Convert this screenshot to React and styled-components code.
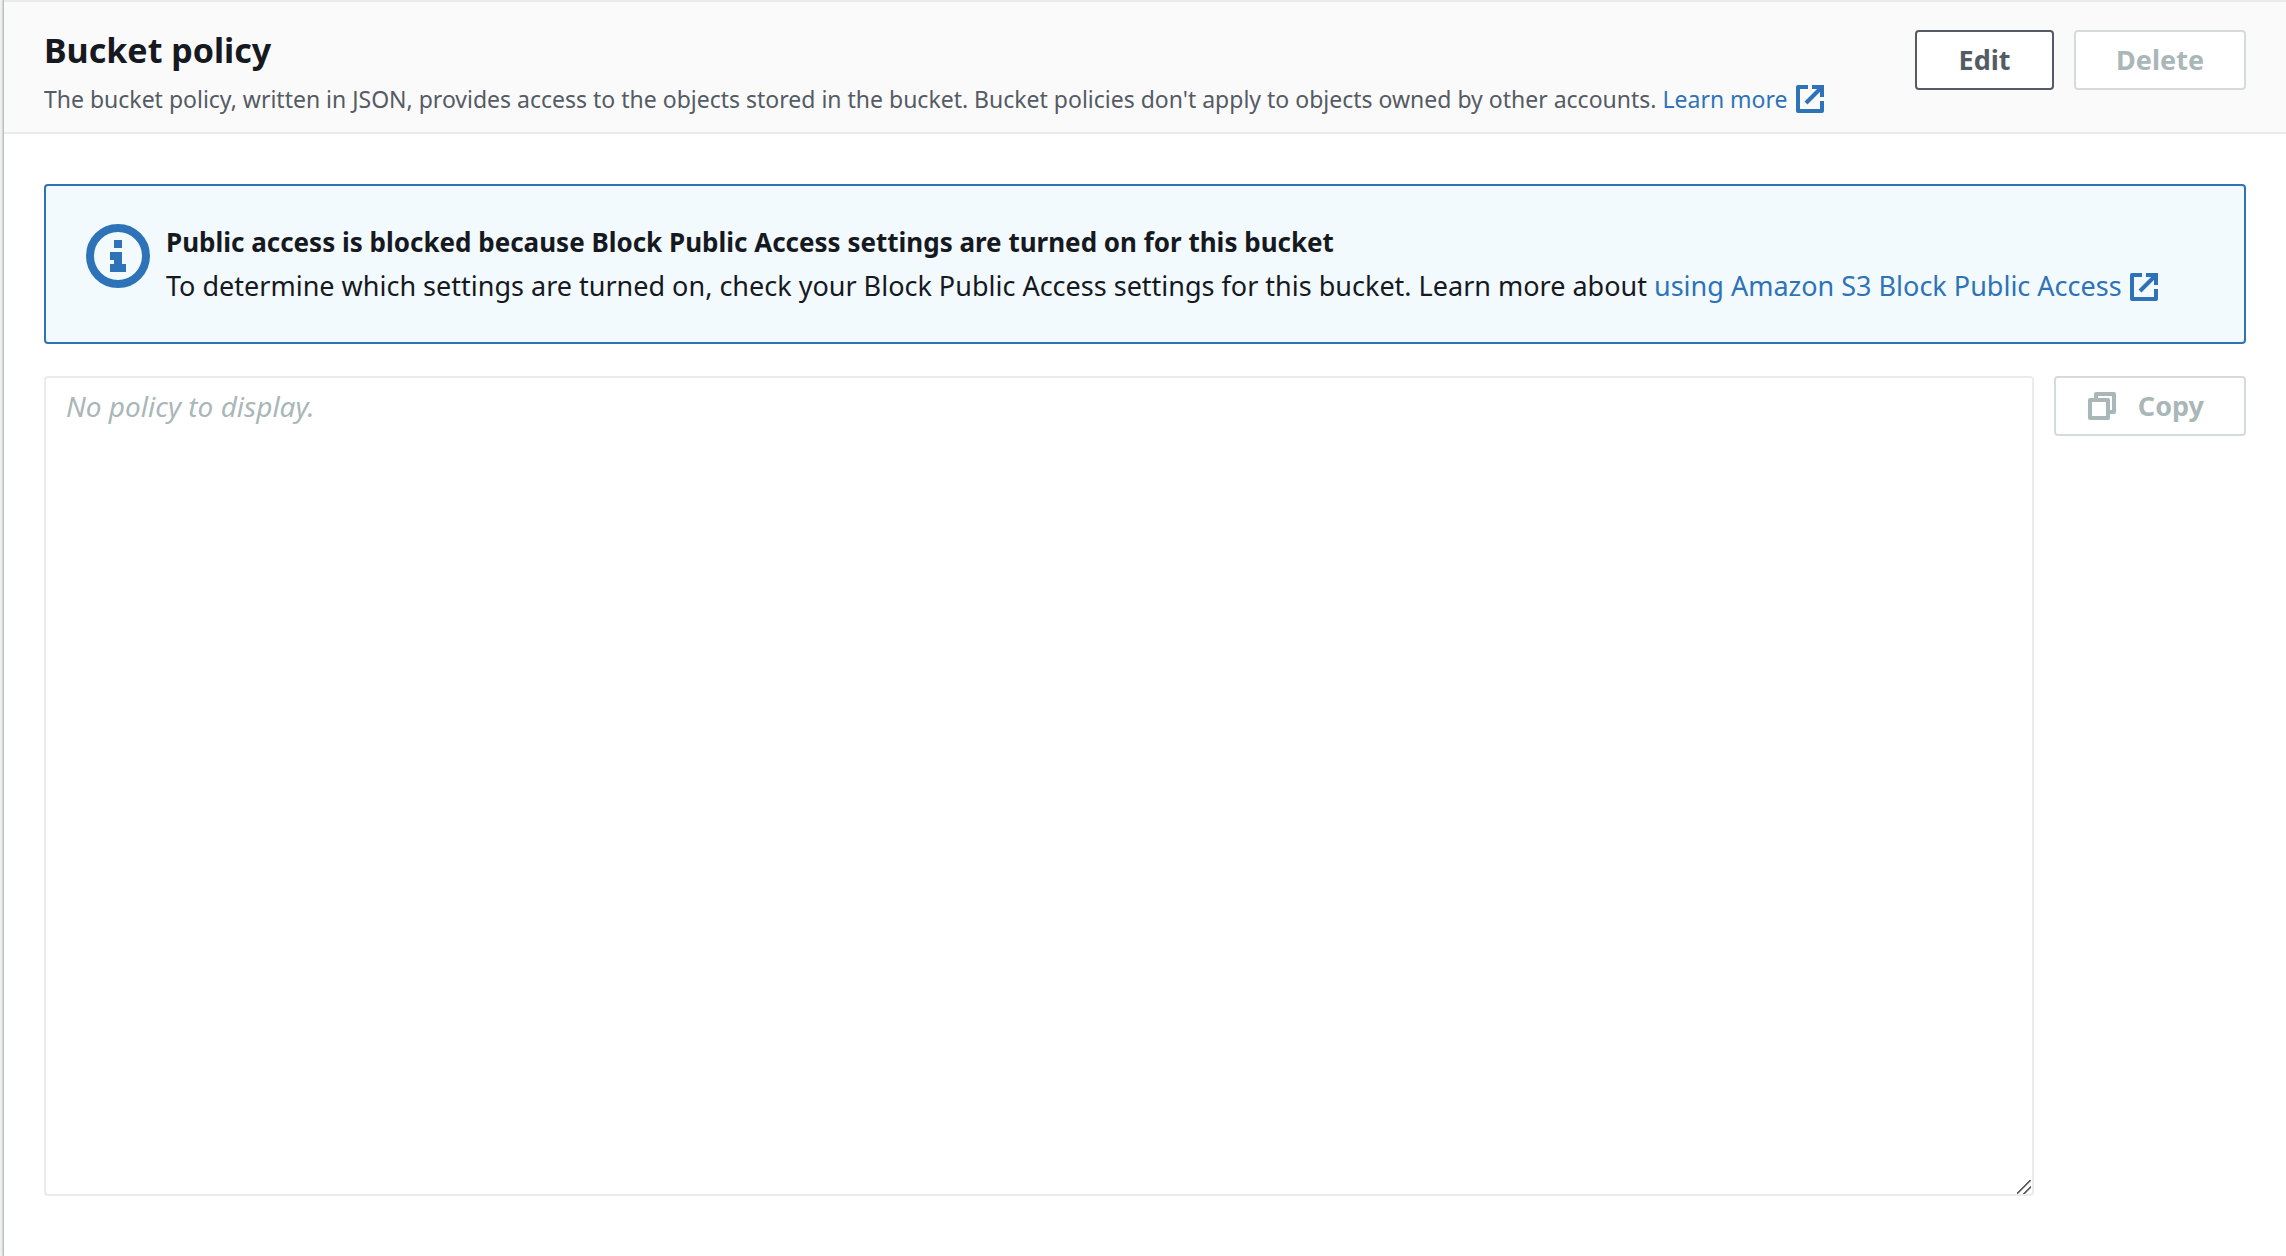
import React from 'react';
import styled, { createGlobalStyle } from 'styled-components';

const color = {
  text: '#16191f',
  secondary: '#545b64',
  disabled: '#aab7b8',
  disabledBorder: '#d5dbdb',
  divider: '#eaecec',
  link: '#2e73b8',
  grip: '#606060',
  infoBackground: '#f2fafd',
  headerBackground: '#fafafa',
};

const GlobalStyle = createGlobalStyle`
  *, *::before, *::after {
    box-sizing: border-box;
  }
  body {
    margin: 0;
    background: #f2f3f3;
    color: ${color.text};
    font-family: "Noto Sans", "Open Sans", sans-serif;
    font-size: 27px;
    line-height: 44px;
  }
`;

const Panel = styled.section`
  min-height: 100vh;
  margin-left: 4px;
  background: #fff;
  border-top: 2px solid ${color.divider};
  box-shadow: -1px 0 1px 0 #b9bebe, -2px 0 2px 0 #d5d8d8;
`;

const PanelHeader = styled.header`
  display: flex;
  align-items: flex-start;
  justify-content: space-between;
  gap: 20px;
  padding: 28px 40px 14px;
  background: ${color.headerBackground};
  border-bottom: 2px solid ${color.divider};
`;

const HeaderText = styled.div`
  display: flex;
  flex-direction: column;
  gap: 10px;
`;

const Title = styled.h2`
  margin: 0;
  font-size: 34px;
  line-height: 40px;
`;

const Description = styled.p`
  margin: 0;
  color: ${color.secondary};
  font-size: 23px;
  line-height: 38px;
`;

const Link = styled.a`
  color: ${color.link};
  text-decoration: none;
  white-space: nowrap;

  &:hover {
    text-decoration: underline;
  }
`;

const Actions = styled.div`
  display: flex;
  flex-shrink: 0;
  gap: 20px;
`;

const Button = styled.button`
  display: inline-flex;
  flex-shrink: 0;
  align-items: center;
  justify-content: center;
  gap: 22px;
  min-width: 139px;
  height: 60px;
  padding: 0 40px 0 ${({ $withIcon }) => ($withIcon ? '32px' : '40px')};
  border: 2px solid ${color.secondary};
  border-radius: 4px;
  background: #fff;
  color: ${color.secondary};
  font: inherit;
  font-weight: 700;
  cursor: pointer;

  &:disabled {
    border-color: ${color.disabledBorder};
    color: ${color.disabled};
    cursor: default;
  }
`;

const PanelBody = styled.div`
  display: flex;
  flex-direction: column;
  gap: 32px;
  padding: 50px 40px 60px;
`;

const Alert = styled.div`
  display: flex;
  align-items: flex-start;
  gap: 16px;
  padding: 34px 40px;
  border: 2px solid ${color.link};
  border-radius: 4px;
  background: ${color.infoBackground};
`;

const AlertTitle = styled.h3`
  margin: 0;
  font-size: 26px;
`;

const AlertText = styled.p`
  margin: 0;
`;

const PolicyRow = styled.div`
  display: flex;
  align-items: flex-start;
  gap: 20px;
`;

const PolicyText = styled.textarea`
  flex: 1;
  min-width: 0;
  height: 820px;
  margin: 0;
  padding: 6px 20px;
  border: 2px solid ${color.divider};
  border-radius: 4px;
  outline: none;
  background: #fff;
  color: ${color.text};
  font: inherit;
  font-size: 28px;
  resize: both;

  &::placeholder {
    color: ${color.disabled};
    font-style: italic;
    opacity: 1;
  }

  &::-webkit-scrollbar {
    width: 16px;
    height: 16px;
  }

  &::-webkit-resizer {
    background: linear-gradient(
        135deg,
        transparent 9px,
        ${color.grip} 9px 10px,
        transparent 11px 14px,
        ${color.grip} 14px 15px,
        transparent 16px
      )
      0 1px / 14px 14px no-repeat;
  }
`;

const Icon = styled.svg`
  flex-shrink: 0;
  width: 28px;
  height: 28px;
  fill: none;
  stroke: currentColor;
  stroke-width: 4;
`;

const InlineIcon = styled(Icon)`
  margin-left: 8px;
  vertical-align: -5px;
`;

const StatusIcon = styled(Icon)`
  width: 64px;
  height: 64px;
  margin-top: 4px;
  color: ${color.link};
  stroke-width: 8;
`;

function ExternalIcon() {
  return (
    <InlineIcon viewBox="0 0 28 28" aria-hidden="true">
      <path d="M12 2H2v24h24V16" strokeLinejoin="round" />
      <path d="M16 2h10v10" />
      <path d="M10 18L26 2" />
    </InlineIcon>
  );
}

function CopyIcon() {
  return (
    <Icon viewBox="0 0 28 28" aria-hidden="true" strokeLinejoin="round">
      <path d="M2 8h18v18H2z" />
      <path d="M8 8V2h18v18h-6" />
    </Icon>
  );
}

function InfoIcon() {
  return (
    <StatusIcon viewBox="0 0 64 64" role="img" aria-label="Info">
      <circle cx="32" cy="32" r="28" />
      <path d="M28 16h8v8h-8zM24 28h12v12h4v8H24v-8h4v-4h-4z" fill="currentColor" stroke="none" />
    </StatusIcon>
  );
}

export default function App() {
  return (
    <>
      <GlobalStyle />
      <Panel aria-labelledby="policy-title">
        <PanelHeader>
          <HeaderText>
            <Title id="policy-title">Bucket policy</Title>
            <Description>
              The bucket policy, written in JSON, provides access to the objects stored in the
              bucket. Bucket policies don't apply to objects owned by other accounts.{' '}
              <Link href="#learn-more">
                Learn more
                <ExternalIcon />
              </Link>
            </Description>
          </HeaderText>
          <Actions>
            <Button type="button">Edit</Button>
            <Button type="button" disabled>
              Delete
            </Button>
          </Actions>
        </PanelHeader>
        <PanelBody>
          <Alert>
            <InfoIcon />
            <div>
              <AlertTitle>
                Public access is blocked because Block Public Access settings are turned on for
                this bucket
              </AlertTitle>
              <AlertText>
                To determine which settings are turned on, check your Block Public Access settings
                for this bucket. Learn more about{' '}
                <Link href="#block-public-access">
                  using Amazon S3 Block Public Access
                  <ExternalIcon />
                </Link>
              </AlertText>
            </div>
          </Alert>
          <PolicyRow>
            <PolicyText
              aria-labelledby="policy-title"
              placeholder="No policy to display."
              readOnly
            />
            <Button type="button" $withIcon disabled>
              <CopyIcon />
              Copy
            </Button>
          </PolicyRow>
        </PanelBody>
      </Panel>
    </>
  );
}
